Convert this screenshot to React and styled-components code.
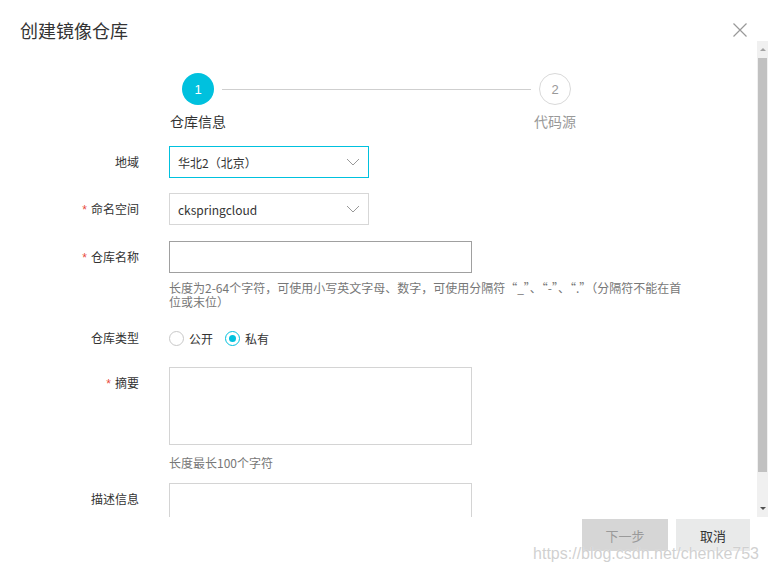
import styled, { createGlobalStyle } from "styled-components";

const GlobalStyle = createGlobalStyle`
  html, body {
    margin: 0;
    padding: 0;
    background: #fff;
    font-family: "Liberation Sans", "Noto Sans CJK SC", sans-serif;
    color: #333;
  }
  * { box-sizing: border-box; }
`;

const Dialog = styled.div`
  position: relative;
  width: 768px;
  height: 571px;
  display: flex;
  flex-direction: column;
  overflow: hidden;
`;

const Header = styled.div`
  height: 41px;
  padding: 20px 20px 0 20px;
  display: flex;
  justify-content: space-between;
  align-items: flex-start;
`;

const Title = styled.div`
  font-size: 18px;
  line-height: 22px;
  margin-top: -1px;
  color: #333;
  font-family: "Noto Sans CJK SC", sans-serif;
`;

const Close = styled.svg`
  width: 16px;
  height: 16px;
  margin-top: 2px;
`;

const Body = styled.div`
  height: 476px;
  display: flex;
`;

const Content = styled.div`
  flex: 1;
  overflow: hidden;
  padding-top: 32px;
`;

const ScrollBar = styled.div`
  width: 11px;
  background: #f0f0f0;
  display: flex;
  flex-direction: column;
  align-items: center;
`;

const Arrow = styled.div`
  height: 17px;
  width: 11px;
  display: flex;
  align-items: center;
  justify-content: center;
  &::after {
    content: "";
    border-left: 3px solid transparent;
    border-right: 3px solid transparent;
    ${(p) =>
      p.$down
        ? "border-top: 3px solid #505050;"
        : "border-bottom: 3px solid #a3a3a3;"}
  }
`;

const Thumb = styled.div`
  width: 9px;
  height: 414px;
  background: #c1c1c1;
`;

const Spacer = styled.div`
  flex: 1;
`;

const Steps = styled.div`
  display: flex;
  align-items: flex-start;
  padding-left: 182px;
`;

const Step = styled.div`
  width: 32px;
  display: flex;
  flex-direction: column;
  align-items: center;
`;

const Circle = styled.div`
  width: 32px;
  height: 32px;
  border-radius: 50%;
  display: flex;
  align-items: center;
  justify-content: center;
  font-size: 13px;
  background: ${(p) => (p.$active ? "#00c1de" : "#fff")};
  color: ${(p) => (p.$active ? "#fff" : "#999")};
  border: ${(p) => (p.$active ? "none" : "1px solid #d9d9d9")};
`;

const StepLabel = styled.div`
  margin-top: 7px;
  font-size: 14px;
  line-height: 18px;
  white-space: nowrap;
  font-family: "Noto Sans CJK SC", sans-serif;
  color: ${(p) => (p.$active ? "#333" : "#999")};
`;

const StepLine = styled.div`
  width: 309px;
  height: 1px;
  background: #cfcfcf;
  margin: 16px 8px 0 8px;
`;

const Form = styled.div`
  margin-top: 16px;
  display: flex;
  flex-direction: column;
`;

const FormItem = styled.div`
  display: grid;
  grid-template-columns: 139px 1fr;
  column-gap: 30px;
  margin-bottom: ${(p) => p.$gap || 15}px;
`;

const Label = styled.div`
  text-align: right;
  font-size: 12px;
  line-height: 32px;
  color: #333;
  font-family: "Noto Sans CJK SC", sans-serif;
  white-space: nowrap;
`;

const Required = styled.span`
  color: #e84a3d;
  margin-right: 4px;
  font-family: "Liberation Sans", sans-serif;
`;

const Field = styled.div`
  display: flex;
  flex-direction: column;
`;

const Select = styled.div`
  width: 200px;
  height: 32px;
  border: 1px solid ${(p) => (p.$focus ? "#00c1de" : "#d7d7d7")};
  display: flex;
  align-items: center;
  justify-content: space-between;
  padding: 0 8px 0 8px;
  font-size: 12px;
  color: #333;
  font-family: "Noto Sans CJK SC", sans-serif;
`;

const Chevron = styled.svg`
  width: 14px;
  height: 8px;
`;

const Input = styled.div`
  width: 303px;
  height: 32px;
  border: 1px solid #a0a0a0;
`;

const TextArea = styled.div`
  width: 303px;
  height: ${(p) => p.$h || 78}px;
  border: 1px solid #d4d4d4;
  ${(p) => p.$open && "border-bottom: none;"}
`;

const Hint = styled.div`
  margin-top: ${(p) => p.$top || 8}px;
  width: 520px;
  font-size: 12px;
  line-height: ${(p) => p.$lh || 14}px;
  color: #777;
  font-family: "Noto Sans CJK SC", sans-serif;
`;

const RadioGroup = styled.div`
  display: flex;
  align-items: center;
  height: 32px;
  gap: 12px;
`;

const RadioOption = styled.label`
  display: flex;
  align-items: center;
  gap: 5px;
  font-size: 12px;
  color: #333;
  font-family: "Noto Sans CJK SC", sans-serif;
`;

const RadioDot = styled.span`
  width: 15px;
  height: 15px;
  border-radius: 50%;
  border: 1px solid ${(p) => (p.$checked ? "#00c1de" : "#c8c8c8")};
  display: flex;
  align-items: center;
  justify-content: center;
  &::after {
    content: "";
    width: 7px;
    height: 7px;
    border-radius: 50%;
    background: ${(p) => (p.$checked ? "#00c1de" : "transparent")};
  }
`;

const Footer = styled.div`
  flex: 1;
  display: flex;
  justify-content: flex-end;
  align-items: flex-start;
  gap: 8px;
  padding: 2px 18px 0 0;
`;

const Button = styled.button`
  height: 32px;
  width: ${(p) => p.$w}px;
  border: none;
  font-size: 13px;
  font-family: "Noto Sans CJK SC", sans-serif;
  background: ${(p) => (p.disabled ? "#d6d6d6" : "#e9eaea")};
  color: ${(p) => (p.disabled ? "#9a9a9a" : "#333")};
  cursor: pointer;
`;

const Watermark = styled.div`
  position: absolute;
  right: 9px;
  bottom: 8px;
  font-size: 16px;
  font-family: "Liberation Sans", sans-serif;
  color: rgba(200, 200, 200, 0.85);
  text-shadow: 0 0 1px #fff;
  pointer-events: none;
`;

const ChevronIcon = () => (
  <Chevron viewBox="0 0 14 8">
    <path d="M1 1l6 6 6-6" fill="none" stroke="#999" strokeWidth="1" />
  </Chevron>
);

export default function App() {
  return (
    <Dialog>
      <GlobalStyle />
      <Header>
        <Title>创建镜像仓库</Title>
        <Close viewBox="0 0 16 16">
          <path d="M1.5 1.5l13 13M14.5 1.5l-13 13" stroke="#999" strokeWidth="1.2" />
        </Close>
      </Header>
      <Body>
        <Content>
          <Steps>
            <Step>
              <Circle $active>1</Circle>
              <StepLabel $active>仓库信息</StepLabel>
            </Step>
            <StepLine />
            <Step>
              <Circle>2</Circle>
              <StepLabel>代码源</StepLabel>
            </Step>
          </Steps>
          <Form>
            <FormItem>
              <Label>地域</Label>
              <Select $focus>
                华北2（北京）
                <ChevronIcon />
              </Select>
            </FormItem>
            <FormItem>
              <Label>
                <Required>*</Required>命名空间
              </Label>
              <Select>
                ckspringcloud
                <ChevronIcon />
              </Select>
            </FormItem>
            <FormItem $gap={13}>
              <Label>
                <Required>*</Required>仓库名称
              </Label>
              <Field>
                <Input />
                <Hint>
                  长度为2-64个字符，可使用小写英文字母、数字，可使用分隔符“_”、“-”、“.”（分隔符不能在首位或末位）
                </Hint>
              </Field>
            </FormItem>
            <FormItem $gap={13}>
              <Label>仓库类型</Label>
              <RadioGroup>
                <RadioOption>
                  <RadioDot />
                  公开
                </RadioOption>
                <RadioOption>
                  <RadioDot $checked />
                  私有
                </RadioOption>
              </RadioGroup>
            </FormItem>
            <FormItem $gap={12}>
              <Label>
                <Required>*</Required>摘要
              </Label>
              <Field>
                <TextArea />
                <Hint $top={10} $lh={16}>
                  长度最长100个字符
                </Hint>
              </Field>
            </FormItem>
            <FormItem>
              <Label>描述信息</Label>
              <TextArea $open />
            </FormItem>
          </Form>
        </Content>
        <ScrollBar>
          <Arrow />
          <Thumb />
          <Spacer />
          <Arrow $down />
        </ScrollBar>
      </Body>
      <Footer>
        <Button $w={86} disabled>
          下一步
        </Button>
        <Button $w={74}>取消</Button>
      </Footer>
      <Watermark>https://blog.csdn.net/chenke753</Watermark>
    </Dialog>
  );
}
